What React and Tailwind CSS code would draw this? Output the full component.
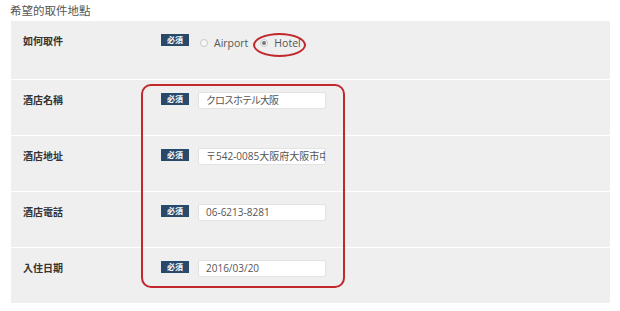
const rows = [
  { label: "如何取件", type: "radio" },
  { label: "酒店名稱", value: "クロスホテル大阪", cjk: true },
  { label: "酒店地址", value: "〒542-0085大阪府大阪市中央区心斎橋筋" },
  { label: "酒店電話", value: "06-6213-8281" },
  { label: "入住日期", value: "2016/03/20" },
];

const Badge = () => (
  <span className="mt-[1px] w-[28px] h-[12px] bg-[#29496a] text-white text-[8px] font-bold leading-[12px] text-center shrink-0">
    必須
  </span>
);

const Radio = ({ checked, label }) => (
  <label className="flex items-center gap-[6px] text-[10.5px] text-[#555] leading-[14px]">
    <span className="w-[8px] h-[8px] rounded-full border border-[#c8c8c8] bg-[#f7f7f7] flex items-center justify-center">
      {checked && <span className="w-[4px] h-[4px] rounded-full bg-[#777]" />}
    </span>
    {label}
  </label>
);

export default function App() {
  return (
    <div
      className="relative w-[620px] h-[311px] bg-white overflow-hidden"
      style={{ fontFamily: '"Open Sans", "Noto Sans CJK TC", sans-serif' }}
    >
      <div className="h-[21px] pl-[10px] pt-[4px] text-[11.5px] leading-[14px] text-[#555]">
        希望的取件地點
      </div>
      <div className="ml-[11px] w-[599px] bg-[#efefef]">
        {rows.map((row, i) => (
          <div
            key={i}
            className={`flex items-start pt-[12px] ${i === 0 ? "h-[59px]" : i === rows.length - 1 ? "h-[55px]" : "h-[56px]"} ${i < rows.length - 1 ? "border-b border-white" : ""}`}
          >
            <div className="w-[150px] pl-[12px] text-[10px] font-bold text-[#333] leading-[16px] shrink-0">
              {row.label}
            </div>
            <Badge />
            {row.type === "radio" ? (
              <div className="flex items-center gap-[12px] ml-[11px] mt-[3px]">
                <Radio label="Airport" />
                <Radio checked label="Hotel" />
              </div>
            ) : (
              <div
                className={`ml-[9px] w-[128px] h-[17px] bg-white border border-[#e2e2e2] rounded-[2px] pl-[7px] text-[10px] leading-[15px] text-[#555] overflow-hidden whitespace-nowrap ${row.cjk ? "tracking-[-1px]" : ""}`}
              >
                {row.value}
              </div>
            )}
          </div>
        ))}
      </div>

      {/* red annotations */}
      <div className="absolute left-[253px] top-[33px] w-[53px] h-[24px] rounded-[50%] border-2 border-[#c1272d]" />
      <div className="absolute left-[141px] top-[84px] w-[204px] h-[204px] rounded-[10px] border-2 border-[#c1272d]" />
    </div>
  );
}
